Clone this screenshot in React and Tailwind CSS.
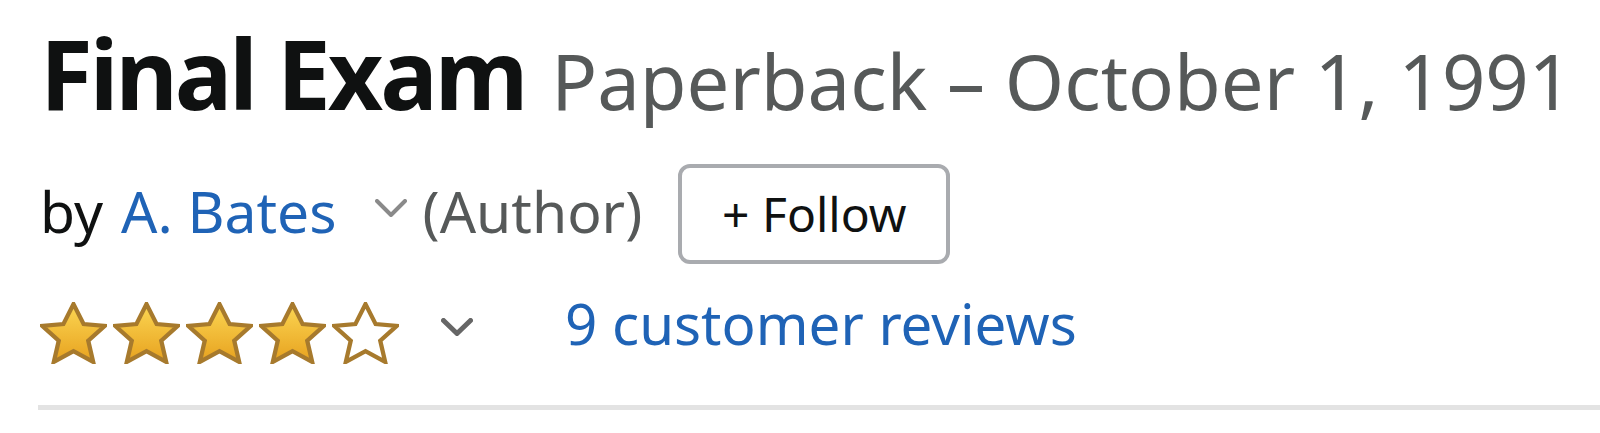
import React from "react";

const font = { fontFamily: '"Noto Sans", "Open Sans", sans-serif' };

function Star({ filled }) {
  return (
    <svg width="67" height="62" viewBox="1.1 0.5 21.8 20.8" preserveAspectRatio="none" className="block">
      <defs>
        <linearGradient id="sg" x1="0" y1="0" x2="0" y2="1">
          <stop offset="0" stopColor="#fcd653" />
          <stop offset="1" stopColor="#e7a21f" />
        </linearGradient>
      </defs>
      <path
        d="M12 1.2 L15.3 7.9 L22.2 8.5 L16.8 13.5 L18.4 20.6 L12 17.0 L5.6 20.6 L7.2 13.5 L1.8 8.5 L8.7 7.9 Z"
        fill={filled ? "url(#sg)" : "#ffffff"}
        stroke="#a77a2d"
        strokeWidth="1.4"
        strokeLinejoin="miter"
      />
    </svg>
  );
}

function Chevron({ color, w = 32, h = 18, sw = 4 }) {
  return (
    <svg width={w} height={h} viewBox={`0 0 ${w} ${h}`} className="block">
      <polyline
        points={`${sw / 2},${sw / 2} ${w / 2},${h - sw / 2} ${w - sw / 2},${sw / 2}`}
        fill="none"
        stroke={color}
        strokeWidth={sw}
        strokeLinecap="round"
        strokeLinejoin="round"
      />
    </svg>
  );
}

export default function App() {
  return (
    <div className="w-[1600px] h-[433px] bg-white overflow-hidden" style={font}>
      <div className="pl-[40px] pt-[18px]">
        <h1 className="flex items-baseline whitespace-nowrap leading-[110px]">
          <span className="text-[96px] font-bold text-[#0f1111] tracking-[-3px]">Final Exam</span>
          <span className="ml-[26px] text-[76px] text-[#565959]">Paperback – October 1, 1991</span>
        </h1>
        <div className="flex items-center mt-[27px] h-[98px] whitespace-nowrap text-[57px]">
          <span className="text-[#0f1111]">by</span>
          <span className="ml-[18px] text-[#1f63b6]">A. Bates</span>
          <span className="ml-[38px] mt-[-8px]">
            <Chevron color="#8a8a8a" w={32} h={18} sw={4} />
          </span>
          <span className="ml-[16px] text-[#565959]">(Author)</span>
          <button className="ml-[36px] mt-[3px] shrink-0 w-[272px] h-[100px] rounded-[12px] border-[4px] border-[#a9abaf] bg-white text-[48px] text-[#0f1111] flex items-center justify-center">
            + Follow
          </button>
        </div>
        <div className="flex items-center mt-[36px] h-[64px]">
          <div className="flex gap-[6px] mt-[8px]">
            <Star filled />
            <Star filled />
            <Star filled />
            <Star filled />
            <Star />
          </div>
          <span className="ml-[42px] mt-[-4px]">
            <Chevron color="#666666" w={32} h={18} sw={5} />
          </span>
          <span className="ml-[92px] mt-[-10px] text-[56.5px] text-[#1f63b6] whitespace-nowrap">9 customer reviews</span>
        </div>
      </div>
      <div className="ml-[38px] mt-[44px] h-[5px] bg-[#e3e3e3]" />
    </div>
  );
}
